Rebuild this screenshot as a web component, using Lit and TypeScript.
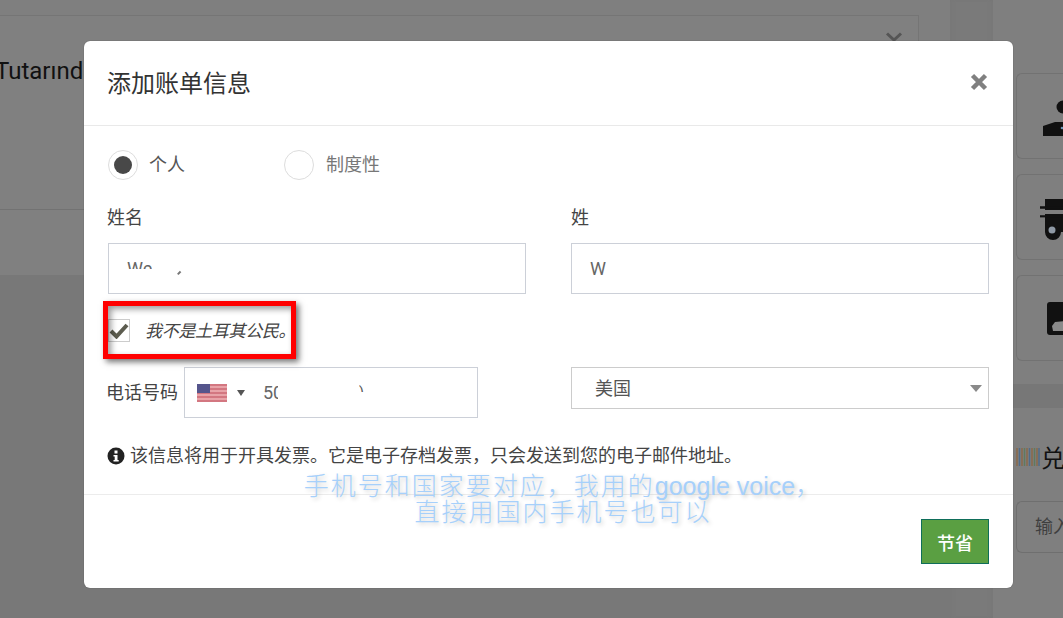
import { LitElement, html, css } from "lit";
import { customElement } from "lit/decorators.js";

const COMMA = "\uFF0C";

@customElement("app-root")
export class AppRoot extends LitElement {
  static styles = css`
    :host { display: block; width: 1063px; height: 618px; position: relative; overflow: hidden; background: #7a7a7a;
      font-family: Roboto, "Noto Sans CJK SC", sans-serif; color: #333; }
    * { box-sizing: border-box; }
    .page { display: grid; grid-template-columns: 950px 43px 70px; height: 618px; }
    .left { padding-top: 15px; display: flex; flex-direction: column; background: #7f7f7f; }
    .left-rest { flex: 1; background: #787878; }
    .card { width: 919px; height: 260px; border: 1px solid #757575; border-left: 0; border-bottom: 0; background: #808080; display: flex; flex-direction: column; overflow: hidden; flex: none; }
    .card-row { display: flex; height: 260px; background: #7f7f7f; flex: none; }
    .card-top { height: 194px; border-bottom: 1px solid #727272; display: flex; flex-direction: column; }
    .chev { align-self: flex-end; margin: 16px 15px 0 0; display: block; }
    .tutar { margin: 15px 0 0 -5px; font-size: 24px; line-height: 28px; color: #111; font-weight: 400; white-space: nowrap; }
    .lower { flex: 1; }
    .gutter { background: #7a7a7a; box-shadow: inset 4px 0 4px -3px #777, inset -4px 0 4px -3px #777; }
    .right { padding: 73px 0 0 23px; display: flex; flex-direction: column; overflow: hidden; background: #7f7f7f; }
    .tile { width: 70px; height: 86px; border: 1px solid #727272; border-right: 0; border-radius: 6px 0 0 6px; margin-bottom: 15px; flex: none; padding-left: 23px; display: flex; align-items: center; overflow: hidden; }
    .tile svg { flex: none; }
    .band { height: 24px; margin: 8px 0 0 -3px; background: #777; flex: none; }
    .promo { display: flex; align-items: center; margin-top: 34px; height: 30px; color: #111; font-size: 24px; white-space: nowrap; flex: none; }
    .promo svg { flex: none; }
    .promo-text { position: relative; top: -1px; }
    .code { width: 70px; height: 52px; margin-top: 29px; border: 1px solid #6f6f6f; border-right: 0; border-radius: 6px 0 0 6px; padding: 13px 0 0 18px; font-size: 18px; line-height: 24px; color: #3f3f3f; white-space: nowrap; flex: none; }

    .modal { position: absolute; left: 84px; top: 41px; width: 929px; height: 547px; background: #fff; border-radius: 6px; box-shadow: 0 0 1px #444; display: flex; flex-direction: column; }
    .head { height: 85px; border-bottom: 1px solid #e9e9e9; display: flex; align-items: center; justify-content: space-between; padding: 0 24px 3px 23px; flex: none; }
    .title { font-size: 24px; font-weight: 400; color: #333; margin: 0; }
    .body { flex: 1; padding: 24px 24px 0 23px; display: flex; flex-direction: column; }
    .radios { display: flex; height: 30px; align-items: center; }
    .radio-item { display: flex; align-items: center; width: 176px; font-size: 18px; color: #777; padding-left: 1px; line-height: 26px; }
    .radio-item.on { color: #555; }
    .radio-item.on .radio-text { margin-left: -1px; }
    .circle { width: 30px; height: 30px; border-radius: 50%; border: 1px solid #ddd; display: flex; align-items: center; justify-content: center; margin-right: 12px; flex: none; }
    .dot { width: 18px; height: 18px; border-radius: 50%; background: #484848; }
    .cols { display: grid; grid-template-columns: 419px 418px; column-gap: 45px; }
    .name-labels { margin-top: 25px; font-size: 18px; line-height: 26px; color: #444; }
    .field { height: 51px; border: 1px solid #ccd0d8; padding-left: 18px; font-size: 18px; line-height: 49px; color: #666; position: relative; overflow: hidden; }
    .field.inset { margin-left: 1px; }
    .first { margin-top: 12px; }
    .w { position: absolute; left: 18px; top: 12px; height: 13px; overflow: hidden; line-height: 26px; font-size: 18px; }
    .tick { position: absolute; left: 68px; top: 28px; width: 4px; height: 1.500px; background: #777; transform: rotate(-45deg); }
    .check-row { margin-top: 24px; height: 24px; display: flex; align-items: center; padding-left: 1px; }
    .box { width: 22px; height: 23px; border: 1px solid #ccc; display: flex; align-items: center; justify-content: center; flex: none; margin-right: 15px; }
    .check-label { font-style: italic; font-size: 17px; color: #444; white-space: nowrap; letter-spacing: -0.3px; position: relative; top: -1px; }
    .phone-row { display: grid; grid-template-columns: 419px 418px; column-gap: 45px; margin-top: 25px; }
    .phone-left { display: flex; align-items: flex-start; }
    .phone-label { font-size: 18px; line-height: 51px; color: #444; width: 77px; margin-left: -1px; margin-right: 1px; flex: none; white-space: nowrap; }
    .phone { width: 294px; height: 51px; border: 1px solid #ccd0d8; display: flex; align-items: center; padding-left: 12px; position: relative; overflow: hidden; flex: none; }
    .phone svg { flex: none; }
    .caret { width: 0; height: 0; border: 4.500px solid transparent; border-top: 6px solid #555; border-bottom: 0; margin: 0 18px 0 10px; flex: none; }
    .num { font-size: 18px; color: #666; height: 22px; line-height: 22px; width: 15px; overflow: hidden; flex: none; }
    .paren { position: absolute; left: 174px; top: 17px; width: 6px; height: 7px; overflow: hidden; font-size: 14px; line-height: 14px; color: #555; }
    .select { height: 42px; border: 1px solid #ccc; display: flex; align-items: center; justify-content: space-between; padding: 0 6px 3px 23px; font-size: 18px; color: #555; }
    .tri { width: 0; height: 0; border: 6px solid transparent; border-top: 7px solid #8a8a8a; border-bottom: 0; margin-top: 3px; }
    .info { margin-top: 26px; display: flex; align-items: center; font-size: 18px; line-height: 24px; color: #444; white-space: nowrap; }
    .info svg { margin-right: 5px; flex: none; }
    .foot { height: 94px; border-top: 1px solid #ececec; display: flex; justify-content: flex-end; align-items: flex-start; padding: 24px 24px 0 0; flex: none; }
    .save { width: 68px; height: 45px; background: #5a9f42; border: 1px solid #0f6e5a; color: #fff; font: 500 18px Roboto, "Noto Sans CJK SC", sans-serif; padding: 0; }

    .note { position: absolute; left: 263px; top: 473px; width: 600px; text-align: center; font-size: 25px; line-height: 26px; letter-spacing: 2px; color: #a6d0fb; font-weight: 300; text-shadow: 2px 2px 4px rgba(0,0,0,.2); pointer-events: none; }
    .note .en { font-weight: 400; letter-spacing: 0; font-family: "Liberation Sans", sans-serif; }
    .red { position: absolute; left: 103px; top: 301px; width: 193px; height: 58px; border: 5px solid #f00; box-shadow: 3px 3px 6px rgba(0,0,0,.55), inset 3px 3px 6px rgba(0,0,0,.4); pointer-events: none; }
  `;

  render() {
    return html`
      <div class="page">
        <div class="left">
          <div class="card-row">
            <div class="card">
              <div class="card-top">
                <svg class="chev" width="18" height="10" viewBox="0 0 18 10"><path d="M2 1.500 9 8l7-6.500" fill="none" stroke="#555" stroke-width="3"/></svg>
                <div class="tutar">Tutarında</div>
              </div>
              <div class="lower"></div>
            </div>
          </div>
          <div class="left-rest"></div>
        </div>
        <div class="gutter"></div>
        <div class="right">
          <div class="tile">
            <svg width="46" height="46" viewBox="0 0 46 46"><circle cx="23" cy="14" r="6.500" fill="#111"/><path d="M3 43V33l6-2 6-2h31v14Z" fill="#111"/><circle cx="22" cy="35" r="1.300" fill="#6c93b5"/></svg>
          </div>
          <div class="tile">
            <svg width="46" height="46" viewBox="0 0 46 46"><path d="M5 5h41v33H21a8 8 0 0 1-16 0Z" fill="#111"/><path d="M0 13.500h23M0 22.500h23" stroke="#111" stroke-width="2.500"/><path d="M0 18h23" stroke="#7f7f7f" stroke-width="4"/><path d="M0 9.500h5M0 25.500h5" stroke="#7f7f7f" stroke-width="4"/><circle cx="12" cy="36" r="3.500" fill="#8f99a5"/></svg>
          </div>
          <div class="tile">
            <svg width="46" height="46" viewBox="0 0 46 46"><rect x="7" y="7" width="39" height="33" rx="3" fill="#111"/><path d="M12 31l3-4 11-1 1 10H13Z" fill="#8a8a8a"/></svg>
          </div>
          <div class="band"></div>
          <div class="promo">
            <svg width="25" height="18" viewBox="0 0 25 18"><path d="M1 0v18M6 0v18M11 0v18M16 0v18M21 0v18" stroke="#8a6a4a" stroke-width="1.500"/><path d="M3.500 0v18M13.500 0v18M23 0v18" stroke="#4f6c8a" stroke-width="1.500"/><path d="M8.500 0v18M18.500 0v18" stroke="#5f7a5f" stroke-width="1.500"/></svg><span class="promo-text">兑换</span>
          </div>
          <div class="code">输入</div>
        </div>
      </div>

      <div class="modal">
        <div class="head">
          <h4 class="title">添加账单信息</h4>
          <svg width="20" height="20" viewBox="0 0 20 20"><path d="M3.500 3.500l13 13M16.500 3.500l-13 13" stroke="#808080" stroke-width="4.500"/></svg>
        </div>
        <div class="body">
          <div class="radios">
            <div class="radio-item on"><span class="circle"><span class="dot"></span></span><span class="radio-text">个人</span></div>
            <div class="radio-item"><span class="circle"></span><span class="radio-text">制度性</span></div>
          </div>
          <div class="cols name-labels"><span>姓名</span><span>姓</span></div>
          <div class="cols first">
            <div class="field inset"><span class="w">We</span><span class="tick"></span></div>
            <div class="field">W</div>
          </div>
          <div class="check-row">
            <span class="box"><svg width="20" height="17" viewBox="0 0 20 17"><path d="M2 9l5.500 5.500L18 3" fill="none" stroke="#5c5c4f" stroke-width="4"/></svg></span>
            <span class="check-label">我不是土耳其公民。</span>
          </div>
          <div class="phone-row">
            <div class="phone-left">
              <span class="phone-label">电话号码</span>
              <div class="phone">
                <svg width="30" height="18" viewBox="0 0 30 18"><rect width="30" height="18" fill="#e8a3a8"/><path d="M0 1h30M0 5h30M0 9h30M0 13h30M0 17h30" stroke="#cc6a74" stroke-width="1.600"/><rect width="13" height="9" fill="#55558c"/></svg>
                <span class="caret"></span>
                <span class="num">50</span>
                <span class="paren">)</span>
              </div>
            </div>
            <div class="select">美国<span class="tri"></span></div>
          </div>
          <div class="info">
            <svg width="18" height="18" viewBox="0 0 18 18"><circle cx="9" cy="9" r="8.500" fill="#222"/><rect x="7.500" y="3.500" width="3" height="3" fill="#fff"/><path d="M6.500 8h4v5h1.200v1.500H6.500V13h1.200V9.500H6.500Z" fill="#fff"/></svg>
            该信息将用于开具发票。它是电子存档发票${COMMA}只会发送到您的电子邮件地址。
          </div>
        </div>
        <div class="foot"><button class="save">节省</button></div>
      </div>

      <div class="red"></div>
      <div class="note">手机号和国家要对应${COMMA}我用的<span class="en">google voice</span>${COMMA}<br />直接用国内手机号也可以</div>
    `;
  }
}
